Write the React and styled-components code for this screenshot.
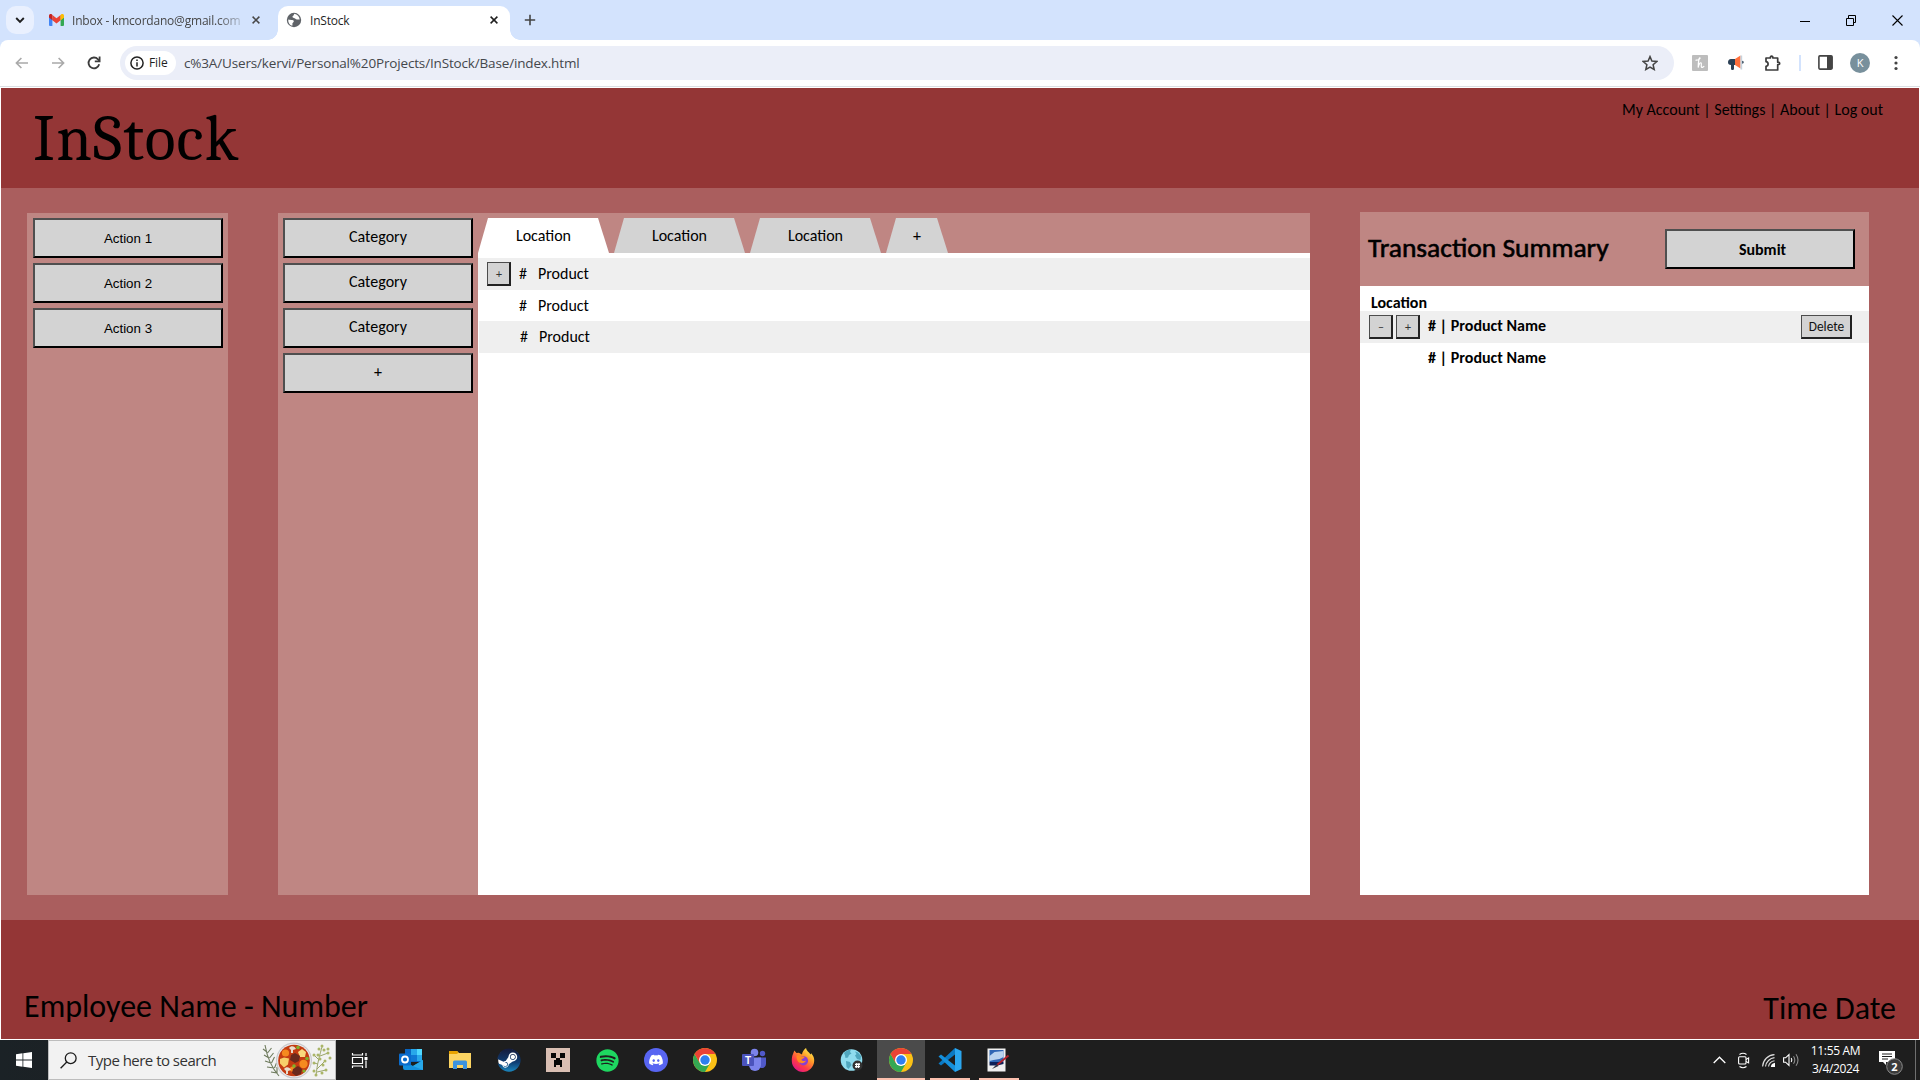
import React from 'react';
import styled, { createGlobalStyle, css } from 'styled-components';
import { FaSpotify, FaDiscord, FaSteam } from 'react-icons/fa';

const ui = '"Segoe UI", "Open Sans", "Noto Sans", sans-serif';
const calibri = 'Carlito, Calibri, Lato, sans-serif';
const cambria = 'Caladea, Cambria, "Liberation Serif", serif';

const Global = createGlobalStyle`
  * { box-sizing: border-box; }
  html, body { margin: 0; padding: 0; overflow: hidden; background: #fff; }
  svg { display: block; flex: none; }
`;

const Screen = styled.div`
  width: 1920px;
  height: 1080px;
  display: flex;
  flex-direction: column;
  overflow: hidden;
  background: #fff;
  font-family: ${calibri};
  color: #000;
`;

/* ---------- browser chrome ---------- */
const TabStrip = styled.div`
  height: 40px;
  display: flex;
  align-items: flex-start;
  padding: 6px 9px 0 6px;
  background: #d3e3fd;
  font-family: ${ui};
`;
const TabSearch = styled.div`
  width: 28px;
  height: 28px;
  border-radius: 10px;
  background: #e9f0fe;
  display: grid;
  place-items: center;
`;
const BrowserTab = styled.div`
  position: relative;
  height: ${p => (p.$active ? 34 : 28)}px;
  width: ${p => (p.$active ? 232 : 229)}px;
  margin-left: ${p => (p.$active ? 0 : 15)}px;
  padding: ${p => (p.$active ? '0 12px 6px 8px' : '0 18px 0 0')};
  display: flex;
  align-items: center;
  gap: 8px;
  font-size: 12px;
  color: ${p => (p.$active ? '#1f1f1f' : '#474747')};
  ${p => p.$active && css`
    background: #fff;
    border-radius: 10px 10px 0 0;
    &::before, &::after {
      content: '';
      position: absolute;
      bottom: 0;
      width: 10px;
      height: 10px;
    }
    &::before { left: -10px; background: radial-gradient(circle at 0 0, #d3e3fd 9.5px, #fff 10px); }
    &::after { right: -10px; background: radial-gradient(circle at 100% 0, #d3e3fd 9.5px, #fff 10px); }
  `}
`;
const TabTitle = styled.span`
  flex: 1;
  padding-top: 1px;
  white-space: nowrap;
  line-height: 18px;
  letter-spacing: ${p => p.$spacing || '0'};
  ${p => p.$fade && css`mask-image: linear-gradient(90deg, #000 84%, rgba(0, 0, 0, 0.15) 100%);`}
`;
const NewTab = styled.div`
  width: 28px;
  height: 28px;
  margin-left: 6px;
  display: grid;
  place-items: center;
`;
const WindowButtons = styled.div`
  margin-left: auto;
  height: 28px;
  display: flex;
  align-items: center;
  gap: 30px;
  padding-right: 8px;
`;
const ToolbarBack = styled.div`
  height: 48px;
  background: #d3e3fd;
`;
const Toolbar = styled.div`
  height: 48px;
  display: flex;
  align-items: center;
  padding: 0 12px 2px 13px;
  background: #fff;
  border-radius: 8px 8px 0 0;
  border-bottom: 1px solid #fff;
  box-shadow: inset 0 -1px 0 #dcdfe3;
  font-family: ${ui};
`;
const NavButtons = styled.div`
  display: flex;
  gap: 18px;
  width: 107px;
`;
const Omnibox = styled.div`
  width: 1554px;
  height: 34px;
  border-radius: 17px;
  background: #ebeef8;
  display: flex;
  align-items: center;
  padding: 0 16px 0 5px;
`;
const FileChip = styled.div`
  width: 51px;
  height: 24px;
  border-radius: 12px;
  background: #fff;
  display: flex;
  align-items: center;
  gap: 5px;
  padding-left: 5px;
  font-size: 12px;
  letter-spacing: -0.1px;
  color: #1f1f1f;
`;
const Url = styled.span`
  flex: 1;
  margin-left: 8px;
  font-size: 13.5px;
  letter-spacing: -0.16px;
  line-height: 20px;
  color: #44474c;
`;
const Extensions = styled.div`
  flex: 1;
  display: flex;
  align-items: center;
  gap: 17px;
  padding-left: 18px;
`;
const ToolPair = styled.div`
  display: flex;
  align-items: center;
  gap: ${p => p.$gap}px;
`;
const Divider = styled.span`
  width: 2px;
  height: 16px;
  background: #d3e3fd;
`;
const Avatar = styled.span`
  width: 20px;
  height: 20px;
  border-radius: 50%;
  background: #78909c;
  color: #fff;
  font: 11px/20px ${ui};
  text-align: center;
`;

/* ---------- web page ---------- */
const Page = styled.div`
  height: 951px;
  margin: 0 1px;
  display: flex;
  flex-direction: column;
`;
const Header = styled.header`
  height: 100px;
  background: #943636;
  display: flex;
  justify-content: space-between;
  padding: 0 36px 0 32px;
`;
const Brand = styled.h1`
  margin: 0;
  padding-top: 14px;
  font: 400 64px/75px ${cambria};
  letter-spacing: 1.2px;
`;
const Account = styled.nav`
  padding-top: 12px;
  font-size: 16px;
  line-height: 20px;
  white-space: pre;
`;
const Body = styled.main`
  height: 732px;
  padding: 25px 50px 25px 26px;
  display: flex;
  align-items: stretch;
  background: #aa5e5e;
`;
const Panel = styled.section`
  width: ${p => p.$width}px;
  margin-right: ${p => p.$after || 0}px;
  padding: 5px 5px 5px ${p => p.$left}px;
  background: #bf8683;
  display: flex;
  flex-direction: column;
  gap: 5px;
`;
const BigButton = styled.div`
  width: 190px;
  height: 40px;
  flex: none;
  border: 2px solid;
  border-color: #4f4f4f #000 #000 #4f4f4f;
  background: #d3d3d3;
  display: flex;
  justify-content: center;
  padding-left: ${p => (p.$bold ? 5 : 0)}px;
  font: ${p => (p.$bold ? 700 : 400)} 16px/${p => p.$line || 34}px ${calibri};
  ${p => p.$plain && css`
    font: 13.33px/37px Arial, "Liberation Sans", sans-serif;
  `}
`;
const Inventory = styled.section`
  width: 832px;
  margin-right: 50px;
  background: #fff;
`;
const TabBar = styled.div`
  height: 40px;
  padding-top: 5px;
  display: flex;
  gap: 5px;
  background: #bf8683;
`;
const LocationTab = styled.div`
  width: ${p => (p.$small ? 62 : 131)}px;
  height: 35px;
  background: ${p => (p.$active ? '#fff' : '#d3d3d3')};
  clip-path: polygon(10px 0, calc(100% - 11px) 0, 100% 100%, 0 100%);
  text-align: center;
  font-size: 16px;
  line-height: 36px;
`;
const Rows = styled.div`
  padding-top: 5px;
`;
const ProductRow = styled.div`
  height: ${p => p.$height}px;
  margin-left: ${p => (p.$shift ? 1 : 0)}px;
  display: grid;
  grid-template-columns: 24px 11px 1fr;
  column-gap: 8px;
  padding-left: 9px;
  align-items: center;
  background: ${p => (p.$shade ? '#efefef' : '#fff')};
  font-size: 16px;
  line-height: 20px;
`;
const Small = styled.div`
  width: ${p => p.$width || 24}px;
  height: 24px;
  border: 1px solid;
  border-width: 1px 2px 2px 1px;
  border-color: #4c4c4c #222 #222 #4c4c4c;
  background: #d3d3d3;
  display: flex;
  justify-content: center;
  padding-left: 1px;
  color: ${p => (p.$width ? '#111' : '#333')};
  font: 400 ${p => p.$size || 12}px/22px ${calibri};
`;
const Summary = styled.section`
  width: 509px;
  margin-top: -1px;
  background: #fff;
`;
const SummaryHead = styled.div`
  height: 74px;
  padding: 0 14px 0 8px;
  display: flex;
  align-items: center;
  justify-content: space-between;
  background: #bf8683;
`;
const SummaryTitle = styled.h2`
  margin: 0 0 2px;
  font: 400 27.5px/32px ${calibri};
  -webkit-text-stroke: 0.6px #000;
`;
const Place = styled.div`
  height: 25px;
  padding: 7px 0 0 11px;
  font: 700 16px/20px ${calibri};
`;
const Line = styled.div`
  height: 32px;
  display: grid;
  grid-template-columns: 24px 24px 1fr 51px;
  column-gap: 3px;
  padding: 0 17px 0 9px;
  align-items: center;
  background: ${p => (p.$shade ? '#efefef' : '#fff')};
  font: 700 16px/20px ${calibri};
`;
const LineName = styled.span`
  padding: 0 0 2px 5px;
`;
const Footer = styled.footer`
  height: 119px;
  padding: 0 23px 0 23px;
  background: #943636;
  display: flex;
  justify-content: space-between;
  align-items: flex-end;
  font-size: 32px;
  line-height: 40px;
`;
const FooterText = styled.span`
  padding-bottom: ${p => p.$bottom}px;
`;

/* ---------- taskbar ---------- */
const Taskbar = styled.div`
  height: 41px;
  border-top: 1px solid #fff;
  display: flex;
  background: linear-gradient(90deg, #1b2226, #1e1e1e 340px);
  font-family: ${ui};
  color: #fff;
`;
const Start = styled.div`
  width: 48px;
  display: grid;
  place-items: center;
`;
const SearchBox = styled.div`
  width: 288px;
  height: 40px;
  border: 1px solid #bdbdbd;
  background: #f2f2f2;
  display: flex;
  align-items: center;
  padding: 0 3px 0 11px;
`;
const SearchText = styled.span`
  margin-left: 11px;
  flex: 1;
  white-space: nowrap;
  font-size: 15px;
  line-height: 20px;
  letter-spacing: -0.52px;
  color: #333;
`;
const TaskView = styled.div`
  width: 51px;
  padding-left: 15px;
  display: flex;
  align-items: center;
`;
const Apps = styled.div`
  display: flex;
  gap: 1px;
`;
const AppCell = styled.div`
  width: 48px;
  display: grid;
  place-items: center;
  background: ${p => (p.$active ? '#4b4b4b' : 'transparent')};
  ${p => p.$line && css`
    background-image: linear-gradient(#fcc0ae, #fcc0ae);
    background-size: ${p.$line}px 2px;
    background-position: bottom center;
    background-repeat: no-repeat;
  `}
`;
const Tray = styled.div`
  margin-left: auto;
  display: flex;
  align-items: center;
`;
const TrayIcons = styled.div`
  display: flex;
  align-items: center;
  gap: 12px;
  & > :last-child { margin-left: -4px; }
`;
const Clock = styled.div`
  width: 71px;
  text-align: center;
  font-size: 12px;
  line-height: 18px;
  letter-spacing: -0.35px;
  padding-bottom: 1px;
`;
const Notice = styled.div`
  width: 44px;
  padding: 1px 0 0 8px;
`;
const ShowDesktop = styled.div`
  width: 5px;
  height: 40px;
  border-left: 1px solid #6f6f6f;
`;

/* ---------- drawings ---------- */
const Close = ({ color = '#333', size = 8 }) => (
  <svg width={size} height={size} viewBox="0 0 8 8"><path d="M.6.6l6.8 6.8M7.4.6L.6 7.4" stroke={color} strokeWidth="1.5" /></svg>
);
const Gmail = () => (
  <svg width="15" height="12" viewBox="0 0 15 12">
    <path d="M0 2v9a1 1 0 001 1h2.4V4.5z" fill="#4285f4" />
    <path d="M15 2v9a1 1 0 01-1 1h-2.400V4.500z" fill="#34a853" />
    <path d="M11.600 1L15 2v1.500l-3.400 2.700z" fill="#fbbc04" />
    <path d="M3.400 6.200V1l4.100 3.200L11.600 1v5.200L7.500 9.400z" fill="#ea4335" />
    <path d="M0 1.800C0 .2 1.700-.4 3 .6l.4.4v5.200L0 3.500z" fill="#c5221f" />
    <path d="M15 1.800C15 .2 13.300-.4 12 .6l-.4.4v5.200L15 3.500z" fill="#fbbc04" />
  </svg>
);
const GlobeIcon = () => (
  <svg width="16" height="16" viewBox="0 0 16 16">
    <circle cx="8" cy="8" r="7.200" fill="#5f6368" />
    <path d="M2.200 7.500c1.800.2 2.600.7 4 .6 1.300 0 1.800.8 1.500 1.700-.3 1-1.400 1-1.300 2 .1.900.2 1.600-.3 2C3.500 13 2 10.500 2.200 7.500zM8.300 1.800c-.6 1-.2 1.500-1.400 2.300-.9.700-.3 1.800.9 1.800 1.300 0 1.600.8 2.400 1.300 1 .6 2.100.1 3.500.4-.2-3-2.300-5.400-5.400-5.800z" fill="#fff" />
  </svg>
);
const Arrow = ({ flip }) => (
  <svg width="18" height="18" viewBox="0 0 18 18" fill="none" stroke="#a9a9a9" strokeWidth="1.600">
    <path d={flip ? 'M3 9h11.500M9.600 4l5 5-5 5' : 'M15 9H3.500M8.400 4l-5 5 5 5'} />
  </svg>
);
const Reload = () => (
  <svg width="18" height="18" viewBox="0 0 18 18" fill="none" stroke="#3c3c3c" strokeWidth="1.800">
    <path d="M14.200 10.300A5.400 5.400 0 1 1 13 5.300l1.300 1.600" /><path d="M14.600 2.600v4.800H9.800" />
  </svg>
);
const Info = () => (
  <svg width="14" height="14" viewBox="0 0 14 14"><circle cx="7" cy="7" r="6.100" fill="none" stroke="#222" strokeWidth="1.500" /><path d="M7 6.200V10.500M7 3.500v1.500" stroke="#222" strokeWidth="1.500" /></svg>
);
const Star = () => (
  <svg width="16" height="16" viewBox="0 0 16 16"><path d="M8 1.600l1.900 4.500 4.900.4-3.700 3.200 1.100 4.800L8 12l-4.200 2.500 1.100-4.800L1.200 6.500l4.900-.4z" fill="none" stroke="#444" strokeWidth="1.500" /></svg>
);
const Honey = () => (
  <svg width="16" height="16" viewBox="0 0 16 16"><rect width="16" height="16" rx="1" fill="#bdbdbd" /><path d="M4 5.200C6 5.400 8.600 4 8 2.900 7.200 2.200 6.300 5 6.200 12.600 6.600 9.500 8 7.400 9 7.800c1 .5-.2 3 .4 4.100.5.900 1.500.6 2.500-.5" fill="none" stroke="#fff" strokeWidth="1.200" strokeLinecap="round" /></svg>
);
const Megaphone = () => (
  <svg width="16" height="16" viewBox="0 0 16 16"><path d="M7 4H3C1 4 0 5.500 0 7.200S1 10 3 10v3.500c0 2 3 2 3 0V10h1z" fill="#2b4055" /><path d="M7 4l5.500-3.500v13L7 10z" fill="#ff6f3c" /><path d="M12.500.5h1.700v14h-1.700z" fill="#c7d3dd" /><path d="M14.200 5.700c2 0 2 3 0 3z" fill="#2b4055" /></svg>
);
const Puzzle = () => (
  <svg width="18" height="18" viewBox="0 0 18 18"><path d="M2 4h4.400c-.4-2.400 2.800-2.400 2.400 0h4.900v4.200c2.600-.4 2.600 2.800 0 2.400V16H2v-3.700c2.800-.2 2.800-4.300 0-4.600z" fill="none" stroke="#3c3c3c" strokeWidth="1.700" strokeLinejoin="round" /></svg>
);
const SidePanel = () => (
  <svg width="15" height="15" viewBox="0 0 15 15"><rect x=".9" y=".9" width="13.200" height="13.200" rx="1" fill="none" stroke="#444" strokeWidth="1.600" /><path d="M9 1h5.200v13H9z" fill="#444" /></svg>
);
const Dots = () => (
  <svg width="4" height="16" viewBox="0 0 4 16" fill="#444"><circle cx="2" cy="2.500" r="1.600" /><circle cx="2" cy="8" r="1.600" /><circle cx="2" cy="13.500" r="1.600" /></svg>
);
const Windows = () => (
  <svg width="16" height="16" viewBox="0 0 16 16" fill="#fff"><path d="M0 2.200L6.500 1.300v6.200H0zM7.300 1.200L16 0v7.500H7.300zM0 8.400h6.500v6.300L0 13.800zM7.300 8.400H16V16l-8.700-1.200z" /></svg>
);
const Stew = () => (
  <svg width="70" height="37" viewBox="0 0 70 37">
    <g fill="none" stroke="#6d7a5c" strokeWidth="1.100">
      <path d="M3 3c2 12 6 22 14 31M5 10L1 7M5.500 11l4-5M7 16l-5-3M7.500 16l4-5M9 21l-6-2M9.500 21l3-6M12 26l-7-1M12.500 26l2-5M15 31l-6-1M15 31l0-6" />
    </g>
    <g fill="none" stroke="#9aa56a" strokeWidth="1"><path d="M54 34c1-12 4-22 6-29M55 27l8-8M57 18l-5-5M58 14l8-3M55 30l9-2M56 22l-4-1" /></g>
    <g fill="#aab568">
      {[[60, 4], [57, 7], [62, 8], [52, 13], [56, 13], [66, 11], [68, 16], [63, 19], [52, 21], [61, 23], [64, 28], [60, 31], [54, 33], [52, 29], [66, 7], [58, 17]].map(([x, y]) => <circle key={x + '-' + y} cx={x} cy={y} r="1.500" />)}
    </g>
    <circle cx="32" cy="18.500" r="18" fill="#c9c9cd" /><circle cx="32" cy="18.500" r="16.800" fill="#ececee" /><circle cx="32" cy="18.500" r="15.800" fill="#c43c12" />
    <circle cx="23.500" cy="11" r="3.600" fill="#f58a1f" /><circle cx="41.500" cy="22" r="4.200" fill="#f58a1f" /><circle cx="30.500" cy="27" r="2.600" fill="#f58a1f" />
    <path d="M18 17l4-1.500 5 1-1 6-4 3-4-4z" fill="#f7d06a" /><path d="M36 10l4-3 4 3-1 5-5 0z" fill="#f9d97d" />
    <path d="M29 13l4-2 5 3-1 5-4 2-5-3z" fill="#6a2a1c" /><path d="M31 27l5-3 4 3-1 5-5 2-4-3z" fill="#6a2a1c" />
    <path d="M27 6c2-3 6-2 7 1l-3 1v3h-2V8z" fill="#e8dccb" /><path d="M22 27c2-3 6-2 7 1l-3 1v3h-2v-3z" fill="#e8dccb" />
    <circle cx="36" cy="5.500" r="1.800" fill="#7fb22b" /><circle cx="45" cy="16.500" r="1.800" fill="#7fb22b" /><circle cx="32" cy="24" r="1.800" fill="#7fb22b" /><circle cx="42" cy="29" r="1.600" fill="#7fb22b" />
  </svg>
);
const TaskViewIcon = () => (
  <svg width="17" height="17" viewBox="0 0 17 17" fill="none" stroke="#fff" strokeWidth="1.200"><path d="M1.500 1v2h10V1M1.500 16v-2h10v2M1.500 5.500h10v6h-10zM15 1v3M15 8.500V16" /><path d="M13.500 5h3v3h-3z" fill="#fff" stroke="none" /></svg>
);
const Outlook = () => (
  <svg width="24" height="24" viewBox="0 0 24 24">
    <path d="M6 1h17v13H6z" fill="#0a66c2" /><path d="M12 1h6v6h-6z" fill="#28a8ea" /><path d="M18 1h5v6h-5z" fill="#50d9ff" /><path d="M12 7h6v6h-6z" fill="#0f78d4" /><path d="M18 7h5v6h-5z" fill="#28a8ea" />
    <path d="M4 12l10 6 10-6v10H6a2 2 0 01-2-2z" fill="#1490df" /><path d="M14 18l10-6v10z" fill="#28a8ea" />
    <rect y="5.500" width="12" height="12" rx="1" fill="#0a6ccd" /><circle cx="6" cy="11.500" r="3" fill="none" stroke="#fff" strokeWidth="1.800" />
  </svg>
);
const Explorer = () => (
  <svg width="22" height="20" viewBox="0 0 22 20"><path d="M0 1h8l2 2h12v15H0z" fill="#fcd462" /><path d="M0 1h8l1.500 1.500L8 4H0z" fill="#e8a300" /><path d="M4 19v-7a1.500 1.500 0 011.500-1.500h11A1.500 1.500 0 0118 12v7h-4v-4H8v4z" fill="#3d93dd" /></svg>
);
const Steam = () => (
  <svg width="24" height="24" viewBox="0 0 24 24">
    <defs><linearGradient id="steam" x1="0" y1="0" x2="0" y2="1"><stop offset="0" stopColor="#151a3a" /><stop offset=".6" stopColor="#0f3d72" /><stop offset="1" stopColor="#1b86bd" /></linearGradient></defs>
    <circle cx="12" cy="12" r="10.800" fill="#fff" /><FaSteam size={24} fill="url(#steam)" />
  </svg>
);
const Creeper = () => (
  <svg width="24" height="24" viewBox="0 0 24 24"><path d="M0 0h24v24H0z" fill="#d9beb2" /><path d="M5 5h5v5H5zM14 5h5v5h-5zM10 10h4v2h2v7h-2v-2h-4v2H8v-7h2z" fill="#060606" /></svg>
);
const Spotify = () => <FaSpotify size={23} color="#1ed760" />;
const Discord = () => (
  <svg width="24" height="24" viewBox="0 0 24 24"><circle cx="12" cy="12" r="12" fill="#5865f2" /><FaDiscord x="4.500" y="4.500" size={15} color="#fff" /></svg>
);
const Chrome = () => (
  <svg width="24" height="24" viewBox="0 0 24 24">
    <circle cx="12" cy="12" r="12" fill="#fbc116" />
    <path d="M1.610 6L6.800 15l5.200 3 5.200-3L12 24A12 12 0 011.610 6z" fill="#34a853" />
    <path d="M1.610 6L6.800 15 8 8 12 6h10.390A12 12 0 001.610 6z" fill="#ea4335" />
    <circle cx="12" cy="12" r="6" fill="#fff" /><circle cx="12" cy="12" r="4.700" fill="#2f7ff0" />
  </svg>
);
const TeamsLetter = styled.text`
  font: 700 10px "Liberation Sans", sans-serif;
  fill: #fff;
`;
const Teams = () => (
  <svg width="24" height="24" viewBox="0 0 24 24">
    <circle cx="20.500" cy="5.500" r="2.700" fill="#5059c9" /><path d="M16 9.500h8V16a4 4 0 01-6 3.500z" fill="#5059c9" /><circle cx="12.500" cy="4.500" r="3.800" fill="#7b83eb" /><path d="M7 9.500h12V17a6 6 0 01-12 0z" fill="#7b83eb" />
    <rect y="6" width="12" height="12" rx="1" fill="#4b53bc" /><TeamsLetter x="6" y="15.500" textAnchor="middle">T</TeamsLetter>
  </svg>
);
const Firefox = () => (
  <svg width="24" height="24" viewBox="0 0 24 24">
    <defs><linearGradient id="fox" x1=".85" y1=".05" x2=".2" y2=".95"><stop offset="0" stopColor="#fff44f" /><stop offset=".35" stopColor="#ff9a28" /><stop offset=".7" stopColor="#ff3b47" /><stop offset="1" stopColor="#e31587" /></linearGradient></defs>
    <path d="M2 6l1.300-3.500L5.500 5l2.300-.3L11 6.500C11 4 13 1.500 15 0c.5 3 3 4 4.500 6.500l.7-1.300C22.500 8 23.400 10 23.200 13c-.3 6-5.200 11-11.200 11S.8 19 .8 13C.8 10 1 8 2 6z" fill="url(#fox)" />
    <circle cx="12.500" cy="12.800" r="4.600" fill="#8a3fd1" /><path d="M5.500 7.500c2-.6 4 0 5 1.200 1.200-.4 3 0 3 .8-.5 1-2.500 1-3 2 0 1.500 2.500 2 4.500 1-1 3-5.500 3.500-7.500 1.500C6 12.500 5.500 10 5.500 7.500z" fill="#ff8a1f" />
  </svg>
);
const Earth = () => (
  <svg width="24" height="24" viewBox="0 0 24 24">
    <circle cx="11.500" cy="12" r="10.800" fill="#8fdcee" /><path d="M4 5c2-2.500 4.500-3.700 7-3.600l-1 2.600 1.500 1.500-2.500 1.500-1 2.500-2.500.5L5 7.500zM15 3.500l3 1 3 3.500-.5 4-3.500-1-2-3.500 1.500-1.500zM6 13l4 1 1.500 3-3 4-2-2z" fill="#4fa6bd" />
    <circle cx="17.500" cy="17.500" r="5" fill="#333" /><path d="M15 16.300h5M15 18.700h5M16.800 15l-.6 5M19 15l-.6 5" stroke="#fff" strokeWidth="1.200" />
  </svg>
);
const VsCode = () => (
  <svg width="24" height="24" viewBox="0 0 24 24"><path d="M17 0v6.500L3 17.500l-2.500-2L17 0z" fill="#0b7ac4" /><path d="M17 24v-6.500L3 6.500l-2.500 2L17 24z" fill="#1590dc" /><path d="M17 0l6.500 3v18L17 24z" fill="#2ba7f0" /></svg>
);
const Paint = () => (
  <svg width="24" height="24" viewBox="0 0 24 24"><path d="M.5.5h18v23H.5z" fill="#f0f0f0" /><path d="M2.500 2h14v12h-14z" fill="#2f66b4" /><path d="M2.500 8l5-4 9-1v6l-4 2-6 1-4 1z" fill="#b9d3ef" /><path d="M2.500 14h14v2l-6 1.500h-8z" fill="#0d1f57" /><path d="M21.500 7.500L10 17" stroke="#b3202a" strokeWidth="1.800" /><path d="M10 16l-5 5 6.500-3z" fill="#334" /></svg>
);
const BadgeText = styled.text`
  font: 700 11px ${ui};
  fill: #fff;
`;
const NoticeIcon = () => (
  <svg width="26" height="28" viewBox="0 0 26 28"><path d="M0 4h16v11h-9v3l-3-3H0z" fill="#fff" /><path d="M3 7h10M3 9.500h10M3 12h6" stroke="#1e1e1e" /><circle cx="15.500" cy="19.500" r="7.800" fill="#3b3b3b" stroke="#8a8a8a" /><BadgeText x="15.500" y="23.500" textAnchor="middle">2</BadgeText></svg>
);

const apps = [
  { icon: Outlook }, { icon: Explorer }, { icon: Steam }, { icon: Creeper }, { icon: Spotify }, { icon: Discord },
  { icon: Chrome }, { icon: Teams }, { icon: Firefox }, { icon: Earth }, { icon: Chrome, active: true, line: 48 },
  { icon: VsCode, line: 40 }, { icon: Paint, line: 40 },
];

export default function App() {
  return (
    <Screen>
      <Global />
      <TabStrip>
        <TabSearch><svg width="10" height="8" viewBox="0 0 10 8"><path d="M1.200 2L5 5.800 8.800 2" fill="none" stroke="#1f1f1f" strokeWidth="1.900" /></svg></TabSearch>
        <BrowserTab><Gmail /><TabTitle $fade $spacing="-0.2px">Inbox - kmcordano@gmail.com</TabTitle><Close color="#474747" /></BrowserTab>
        <BrowserTab $active><GlobeIcon /><TabTitle $spacing="-0.2px">InStock</TabTitle><Close color="#1f1f1f" /></BrowserTab>
        <NewTab><svg width="12" height="12" viewBox="0 0 12 12"><path d="M6 .8v10.400M.8 6h10.400" stroke="#444" strokeWidth="1.600" /></svg></NewTab>
        <WindowButtons>
          <svg width="16" height="11" viewBox="0 0 16 11"><path d="M0 6.500h10" stroke="#000" /></svg>
          <svg width="16" height="11" viewBox="0 0 16 11" fill="none" stroke="#000"><path d="M.5 3.500h7v7h-7zM2.500 3V.5h7v7h-2" /></svg>
          <svg width="11" height="11" viewBox="0 0 11 11"><path d="M.5.500l10 10M10.500.500l-10 10" stroke="#000" strokeWidth="1.100" /></svg>
        </WindowButtons>
      </TabStrip>
      <ToolbarBack>
        <Toolbar>
          <NavButtons><Arrow /><Arrow flip /><Reload /></NavButtons>
          <Omnibox>
            <FileChip><Info />File</FileChip>
            <Url>c%3A/Users/kervi/Personal%20Projects/InStock/Base/index.html</Url>
            <Star />
          </Omnibox>
          <Extensions>
            <ToolPair $gap={20}><Honey /><Megaphone /><Puzzle /></ToolPair>
            <Divider />
            <SidePanel />
            <ToolPair $gap={24}><Avatar>K</Avatar><Dots /></ToolPair>
          </Extensions>
        </Toolbar>
      </ToolbarBack>

      <Page>
        <Header>
          <Brand>InStock</Brand>
          <Account>My Account | Settings | About | Log out</Account>
        </Header>
        <Body>
          <Panel $width={201} $left={6} $after={50}>
            {[1, 2, 3].map(n => <BigButton key={n} $plain>Action {n}</BigButton>)}
          </Panel>
          <Panel $width={200} $left={5}>
            {['Category', 'Category', 'Category', '+'].map((t, i) => <BigButton key={i}>{t}</BigButton>)}
          </Panel>
          <Inventory>
            <TabBar>
              <LocationTab $active>Location</LocationTab>
              <LocationTab>Location</LocationTab>
              <LocationTab>Location</LocationTab>
              <LocationTab $small>+</LocationTab>
            </TabBar>
            <Rows>
              <ProductRow $height={32} $shade><Small>+</Small><span>#</span><span>Product</span></ProductRow>
              <ProductRow $height={31}><span /><span>#</span><span>Product</span></ProductRow>
              <ProductRow $height={32} $shade $shift><span /><span>#</span><span>Product</span></ProductRow>
            </Rows>
          </Inventory>
          <Summary>
            <SummaryHead>
              <SummaryTitle>Transaction Summary</SummaryTitle>
              <BigButton $bold $line={38}>Submit</BigButton>
            </SummaryHead>
            <Place>Location</Place>
            <Line $shade><Small>–</Small><Small>+</Small><LineName># | Product Name</LineName><Small $width={51} $size={13.3}>Delete</Small></Line>
            <Line><span /><span /><LineName># | Product Name</LineName><span /></Line>
          </Summary>
        </Body>
        <Footer>
          <FooterText $bottom={12}>Employee Name - Number</FooterText>
          <FooterText $bottom={10}>Time Date</FooterText>
        </Footer>
      </Page>

      <Taskbar>
        <Start><Windows /></Start>
        <SearchBox>
          <svg width="17" height="17" viewBox="0 0 17 17" fill="none" stroke="#1b1b1b" strokeWidth="1.300"><circle cx="10.700" cy="6.200" r="5.400" /><path d="M6.800 10L.6 16.300" /></svg>
          <SearchText>Type here to search</SearchText>
          <Stew />
        </SearchBox>
        <TaskView><TaskViewIcon /></TaskView>
        <Apps>
          {apps.map(({ icon: Icon, active, line }, i) => <AppCell key={i} $active={active} $line={line}><Icon /></AppCell>)}
        </Apps>
        <Tray>
          <TrayIcons>
            <svg width="13" height="8" viewBox="0 0 13 8"><path d="M.7 7l5.800-5.800L12.300 7" fill="none" stroke="#fff" strokeWidth="1.300" /></svg>
            <svg width="12" height="17" viewBox="0 0 12 17" fill="none" stroke="#fff" strokeWidth="1.100"><rect x=".6" y="4.800" width="7.400" height="7.200" rx="1" /><path d="M8 7.500l2.600-1.600v5L8 9.400M1.500 2.500Q5 0 8.500 2.500M1.500 14.500Q5 17 8.500 14.500" /></svg>
            <svg width="13" height="13" viewBox="0 0 13 13" fill="none" stroke="#fff" strokeWidth="1.100"><path d="M.6 12.500C1 6 6 1 12.500.6M3.500 12.500C4 8 8 4 12.500 3.600M6.500 12.500C7 9.500 9 7.200 12.500 6.700" stroke="#ddd" /><path d="M9.500 12.500c.2-1.500 1.200-2.700 3-3v3z" fill="#fff" /></svg>
            <svg width="17" height="14" viewBox="0 0 17 14" fill="none" stroke="#fff" strokeWidth="1.100"><path d="M.6 4.800h2L6 1.500v11L2.600 9.200h-2z" /><path d="M8.200 5q1.300 2 0 4" /><path d="M10.500 3.200q2.600 3.800 0 7.600M13 1.200q4 5.800 0 11.600" stroke="#8c8c8c" /></svg>
          </TrayIcons>
          <Clock>11:55 AM<br />3/4/2024</Clock>
          <Notice><NoticeIcon /></Notice>
          <ShowDesktop />
        </Tray>
      </Taskbar>
    </Screen>
  );
}
